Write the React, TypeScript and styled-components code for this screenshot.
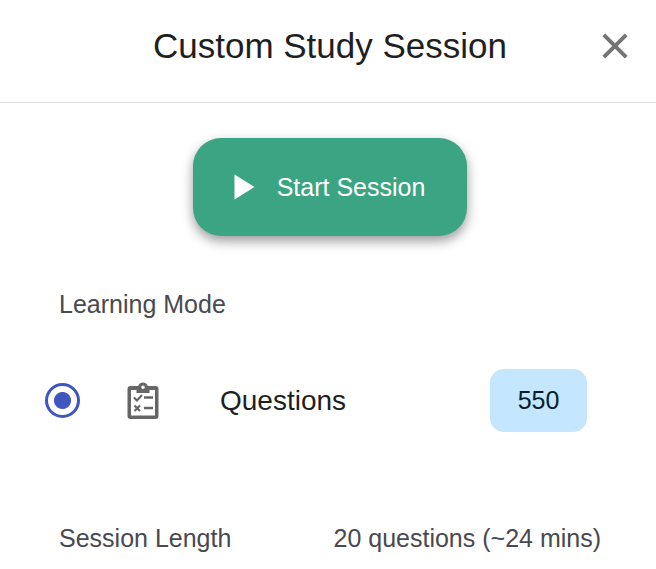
import React from "react";
import styled, { createGlobalStyle } from "styled-components";

const GlobalStyle = createGlobalStyle`
  * { box-sizing: border-box; }
  body { margin: 0; background: #fff; color: #1f1f1f; font-family: "Liberation Sans", Arial, sans-serif; }
`;

const Dialog = styled.main`
  display: flex;
  flex-direction: column;
`;

const Header = styled.header`
  display: grid;
  grid-template-columns: 84px 1fr 80px;
  align-items: center;
  height: 103px;
  padding-bottom: 10px;
  border-bottom: 1px solid #dedede;
`;

const Title = styled.h1`
  grid-column: 2;
  margin: 0;
  font-size: 35px;
  font-weight: 400;
  line-height: 40px;
  text-align: center;
  white-space: nowrap;
`;

const CloseButton = styled.button`
  display: grid;
  place-items: center;
  width: 48px;
  height: 48px;
  margin-left: 15px;
  padding: 0;
  border: 0;
  background: none;
  color: #757575;
  cursor: pointer;
`;

const Actions = styled.div`
  display: flex;
  justify-content: center;
  padding: 35px 0 0 4px;
`;

const StartButton = styled.button`
  display: flex;
  align-items: center;
  gap: 22px;
  height: 98px;
  padding: 0 42px 0 41px;
  border: 0;
  border-radius: 28px;
  background: #3ba583;
  box-shadow: 0 5px 12px rgba(0, 0, 0, 0.4);
  color: #fff;
  font: 400 25px/32px "Liberation Sans", Arial, sans-serif;
  white-space: nowrap;
  cursor: pointer;
`;

const ModeGroup = styled.fieldset`
  min-width: 0;
  margin: 52px 0 0;
  padding: 0;
  border: 0;
`;

const Legend = styled.legend`
  padding: 0 59px;
  color: #49494f;
  font-size: 25px;
  line-height: 32px;
`;

const ModeRow = styled.label`
  display: grid;
  grid-template-columns: 82px 93px 1fr auto;
  align-items: center;
  margin-top: 49px;
  padding: 0 69px 0 45px;
  font-size: 28px;
  line-height: 32px;
  cursor: pointer;
`;

const Radio = styled.input`
  appearance: none;
  width: 35px;
  height: 35px;
  margin: 0;
  border: 3px solid #3f55bf;
  border-radius: 50%;

  &:checked {
    background: radial-gradient(circle, #3f55bf 8px, transparent 9px);
  }
`;

const Count = styled.span`
  min-width: 97px;
  padding: 15px 0 16px;
  border-radius: 14px;
  background: #c4e7ff;
  color: #06202e;
  font-size: 25px;
  text-align: center;
`;

const LengthRow = styled.section`
  display: flex;
  justify-content: space-between;
  margin-top: 90px;
  padding: 0 55px 15px 59px;
  color: #49494f;
  font-size: 25px;
  line-height: 32px;
`;

export default function App() {
  return (
    <Dialog>
      <GlobalStyle />
      <Header>
        <Title>Custom Study Session</Title>
        <CloseButton aria-label="Close">
          <svg width="26" height="26" viewBox="0 0 26 26" stroke="currentColor" strokeWidth="4" aria-hidden="true">
            <path d="M1.800 1.800l22.400 22.400M24.200 1.800l-22.400 22.400" />
          </svg>
        </CloseButton>
      </Header>
      <Actions>
        <StartButton>
          <svg width="21" height="26" viewBox="0 0 21 26" fill="currentColor" aria-hidden="true">
            <path d="M0.500 0.500l20 12.500L0.500 25.500z" />
          </svg>
          Start Session
        </StartButton>
      </Actions>
      <ModeGroup>
        <Legend>Learning Mode</Legend>
        <ModeRow>
          <Radio type="radio" name="mode" defaultChecked />
          <svg width="32" height="38" viewBox="0 0 32 38" fill="none" stroke="#666" aria-hidden="true">
            <path
              d="M3.500 4H11.200a5 5 0 0 1 9.600 0H28.500a3 3 0 0 1 3 3V34a3 3 0 0 1-3 3H3.500a3 3 0 0 1-3-3V7a3 3 0 0 1 3-3zM4 8V33.500H28V8H22.500V11H9.500V8zM16 3.500a1.800 1.800 0 1 0 0 3.600a1.800 1.800 0 0 0 0-3.600z"
              fill="#666"
              fillRule="evenodd"
              stroke="none"
            />
            <path d="M7 15.500l3 3 5-5.500M7.500 23.500l5.500 5.500M13 23.500l-5.500 5.500" strokeWidth="2.200" />
            <path d="M17 15.500h9M17 26h9" strokeWidth="2.600" />
          </svg>
          <span>Questions</span>
          <Count>550</Count>
        </ModeRow>
      </ModeGroup>
      <LengthRow>
        <span>Session Length</span>
        <span>20 questions (~24 mins)</span>
      </LengthRow>
    </Dialog>
  );
}
